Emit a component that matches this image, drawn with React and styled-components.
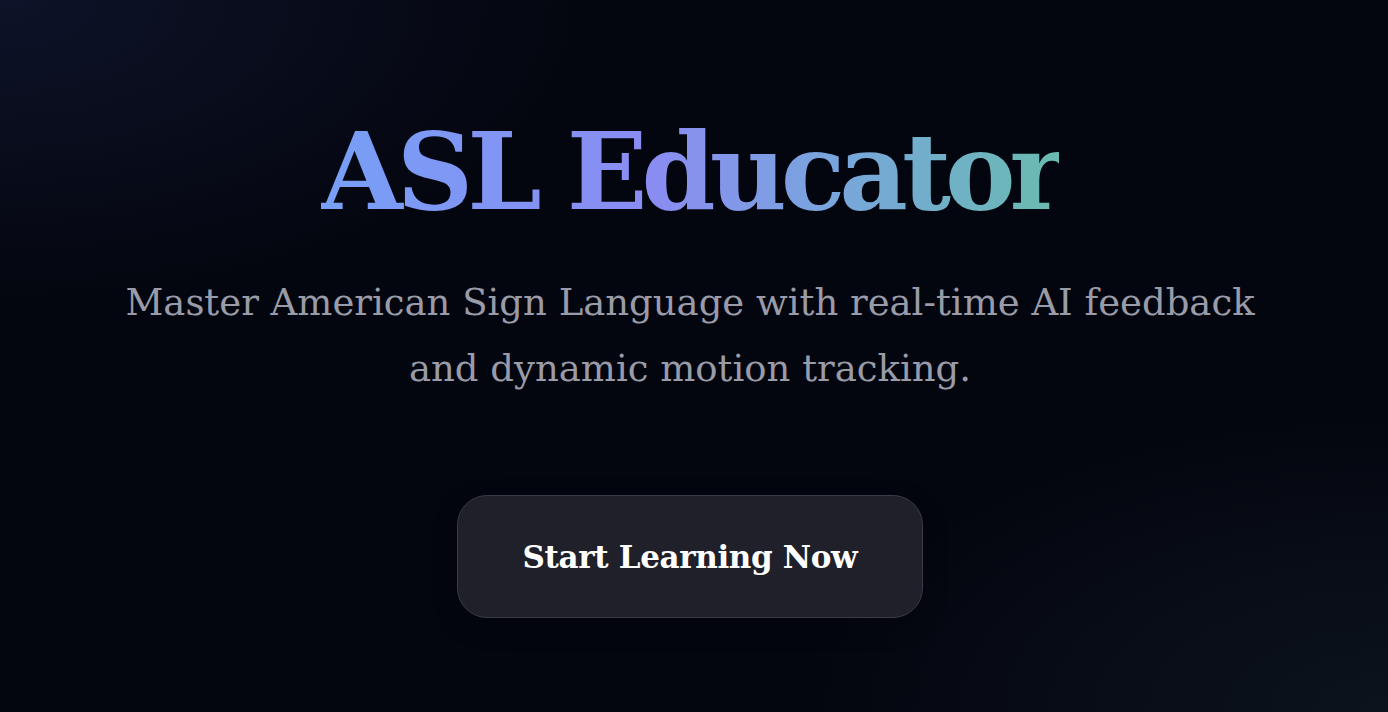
import React from 'react';
import styled, { createGlobalStyle } from 'styled-components';

const GlobalStyle = createGlobalStyle`
  * { box-sizing: border-box; }
  html, body {
    margin: 0;
    padding: 0;
    background: #04060f;
  }
`;

const Page = styled.main`
  min-height: 100vh;
  display: flex;
  flex-direction: column;
  align-items: center;
  padding: 108px 44px 40px 36px;
  font-family: "Roboto Slab", "DejaVu Serif", serif;
  background:
    radial-gradient(ellipse 60% 60% at 0% 0%, rgba(22, 32, 66, 0.5), transparent 70%),
    radial-gradient(ellipse 60% 60% at 100% 100%, rgba(18, 30, 40, 0.55), transparent 70%),
    #04060f;
`;

const Title = styled.h1`
  margin: 0;
  font-size: 106px;
  font-weight: 700;
  line-height: 1.2;
  letter-spacing: -6px;
  background: linear-gradient(90deg, #779ff6 0%, #8a8cf2 45%, #78a6dc 70%, #69bbb0 100%);
  -webkit-background-clip: text;
  background-clip: text;
  color: transparent;
`;

const Subtitle = styled.p`
  margin: 35px 0 0;
  max-width: 1170px;
  font-size: 37px;
  line-height: 66px;
  color: #999ca8;
  text-align: center;
`;

const StartButton = styled.button`
  margin-top: 93px;
  width: 466px;
  height: 123px;
  border-radius: 30px;
  border: 1.5px solid #393b46;
  background: #1f2029;
  color: #ffffff;
  font-family: inherit;
  font-size: 31px;
  font-weight: 700;
  letter-spacing: -0.35px;
  cursor: pointer;
  box-shadow: 0 8px 24px rgba(0, 0, 0, 0.25);
`;

export default function App() {
  return (
    <>
      <GlobalStyle />
      <Page>
        <Title>ASL Educator</Title>
        <Subtitle>
          Master American Sign Language with real-time AI feedback and dynamic motion tracking.
        </Subtitle>
        <StartButton>Start Learning Now</StartButton>
      </Page>
    </>
  );
}
